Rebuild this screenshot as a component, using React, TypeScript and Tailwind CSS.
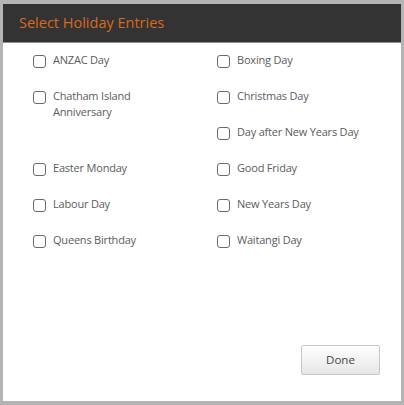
import React from "react";

type Item = { label: string; col: 1 | 2; row: number; span?: number };

const items: Item[] = [
  { label: "ANZAC Day", col: 1, row: 1 },
  { label: "Boxing Day", col: 2, row: 1 },
  { label: "Chatham Island Anniversary", col: 1, row: 2, span: 2 },
  { label: "Christmas Day", col: 2, row: 2 },
  { label: "Day after New Years Day", col: 2, row: 3 },
  { label: "Easter Monday", col: 1, row: 4 },
  { label: "Good Friday", col: 2, row: 4 },
  { label: "Labour Day", col: 1, row: 5 },
  { label: "New Years Day", col: 2, row: 5 },
  { label: "Queens Birthday", col: 1, row: 6 },
  { label: "Waitangi Day", col: 2, row: 6 },
];

const colClass: Record<number, string> = { 1: "col-start-1", 2: "col-start-2" };
const rowClass: Record<number, string> = {
  1: "row-start-1",
  2: "row-start-2",
  3: "row-start-3",
  4: "row-start-4",
  5: "row-start-5",
  6: "row-start-6",
};

function Entry({ item }: { item: Item }) {
  return (
    <label
      className={`${colClass[item.col]} ${rowClass[item.row]} ${item.span ? "row-span-2" : ""} flex items-start gap-[7px] cursor-pointer`}
    >
      <span className="mt-[4px] w-[13px] h-[13px] shrink-0 rounded-[3px] border border-[#6b6b6b] bg-white" />
      <span className="text-[11px] leading-[16px] tracking-[-0.2px] text-[#5c5c5c] w-[130px] pt-[1px]">
        {item.label}
      </span>
    </label>
  );
}

export default function App() {
  return (
    <div
      className="w-[404px] h-[405px] bg-[#b4b4b4] pt-[4px] pl-[3px] overflow-hidden"
      style={{ fontFamily: "'Open Sans', sans-serif" }}
    >
      <div className="w-[398px] h-[397px] bg-white flex flex-col">
        <div className="h-[39px] bg-[#333333] border-b border-[#8f8f8f] pl-[16px] flex items-center shrink-0">
          <span className="text-[14.5px] text-[#d8691f]">Select Holiday Entries</span>
        </div>
        <div className="pl-[30px] pt-[8px] grid grid-cols-[184px_184px] grid-rows-[repeat(6,36px)]">
          {items.map((it) => (
            <Entry key={it.label} item={it} />
          ))}
        </div>
        <div className="flex-1" />
        <div className="flex justify-end pr-[21px] pb-[26px]">
          <button className="w-[79px] h-[30px] rounded-[2px] border border-[#c8c8c8] bg-gradient-to-b from-white to-[#e6e6e6] text-[11.5px] text-[#444444]">
            Done
          </button>
        </div>
      </div>
    </div>
  );
}
